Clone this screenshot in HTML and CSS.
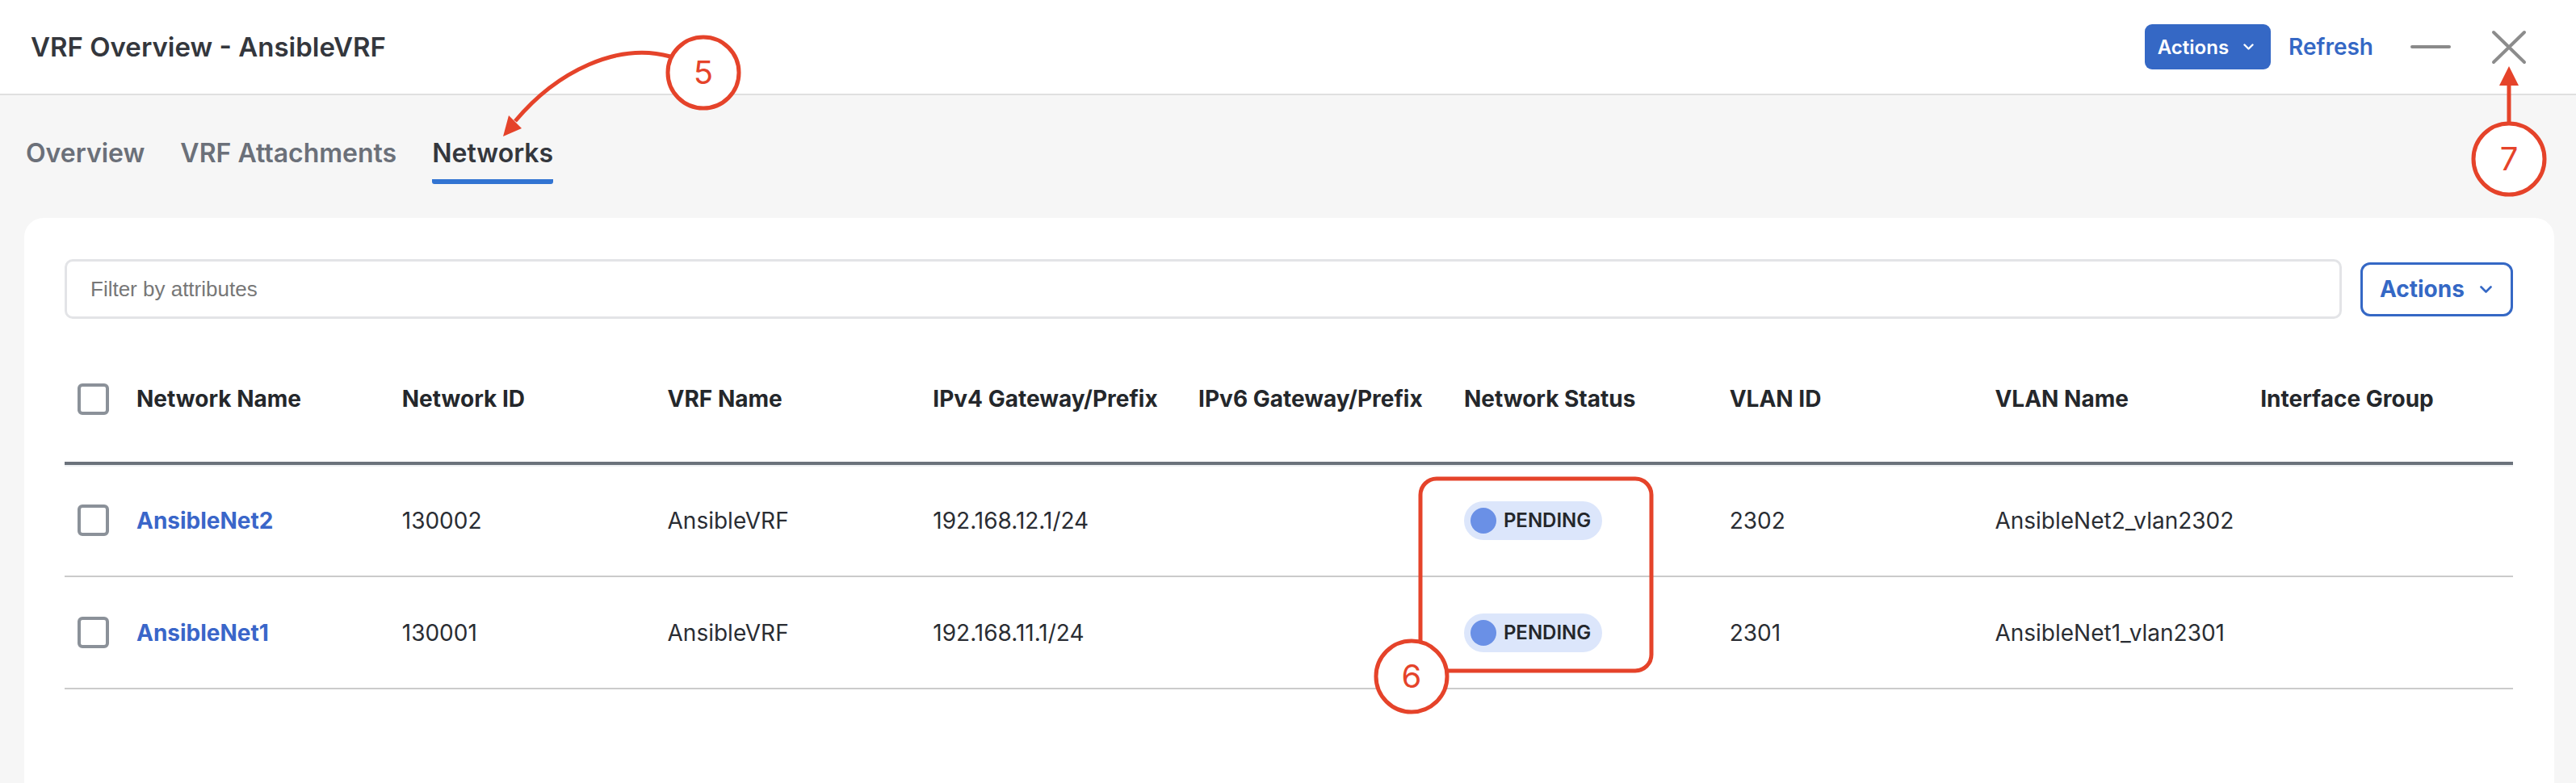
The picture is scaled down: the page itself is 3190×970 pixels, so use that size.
FILE: index.html
```html
<!DOCTYPE html>
<html lang="en">
<head>
<meta charset="UTF-8">
<title>VRF Overview - AnsibleVRF</title>
<link rel="stylesheet" href="styles.css">
</head>
<body>
<div class="page">
    <div class="topbar">
        <h1>VRF Overview - AnsibleVRF</h1>
        <div class="top-actions">
            <button class="btn-solid">Actions
                <svg width="13" height="8" viewBox="0 0 13 8"><path d="M1.5 1.5l5 5 5-5" fill="none" stroke="#fff" stroke-width="2.4" stroke-linecap="round" stroke-linejoin="round"/></svg>
            </button>
            <a class="refresh">Refresh</a>
            <span class="minimize"></span>
            <svg class="close" width="44" height="43" viewBox="0 0 44 43"><path d="M3 3l38 37M41 3L3 40" stroke="#8c8c8c" stroke-width="4" stroke-linecap="round"/></svg>
        </div>
    </div>

    <div class="tabs">
        <span class="tab">Overview</span>
        <span class="tab">VRF Attachments</span>
        <span class="tab active">Networks</span>
    </div>

    <div class="card">
        <div class="toolbar">
            <input type="text" class="filter" placeholder="Filter by attributes">
            <button class="btn-outline">Actions
                <svg width="15" height="9" viewBox="0 0 15 9"><path d="M1.5 1.5l6 6 6-6" fill="none" stroke="#3568c5" stroke-width="2.6" stroke-linecap="round" stroke-linejoin="round"/></svg>
            </button>
        </div>

        <div class="grid">
            <div class="row head">
                <div class="cell"><span class="check"></span></div>
                <div class="cell">Network Name</div>
                <div class="cell">Network ID</div>
                <div class="cell">VRF Name</div>
                <div class="cell">IPv4 Gateway/Prefix</div>
                <div class="cell">IPv6 Gateway/Prefix</div>
                <div class="cell">Network Status</div>
                <div class="cell">VLAN ID</div>
                <div class="cell">VLAN Name</div>
                <div class="cell">Interface Group</div>
            </div>
            <div class="row">
                <div class="cell"><span class="check"></span></div>
                <div class="cell"><a class="link">AnsibleNet2</a></div>
                <div class="cell">130002</div>
                <div class="cell">AnsibleVRF</div>
                <div class="cell">192.168.12.1/24</div>
                <div class="cell"></div>
                <div class="cell"><span class="pill"><span class="dot"></span>PENDING</span></div>
                <div class="cell">2302</div>
                <div class="cell">AnsibleNet2_vlan2302</div>
                <div class="cell"></div>
            </div>
            <div class="row">
                <div class="cell"><span class="check"></span></div>
                <div class="cell"><a class="link">AnsibleNet1</a></div>
                <div class="cell">130001</div>
                <div class="cell">AnsibleVRF</div>
                <div class="cell">192.168.11.1/24</div>
                <div class="cell"></div>
                <div class="cell"><span class="pill"><span class="dot"></span>PENDING</span></div>
                <div class="cell">2301</div>
                <div class="cell">AnsibleNet1_vlan2301</div>
                <div class="cell"></div>
            </div>
        </div>
    </div>
</div>

<!-- callout annotations drawn over the screen -->
<svg class="callouts" width="3190" height="970" viewBox="0 0 3190 970">
    <g fill="none" stroke="#e5432a" stroke-width="5">
        <path d="M830 70 C 765 52, 690 88, 638 150"/>
        <line x1="3107" y1="152" x2="3107" y2="104"/>
        <rect x="1759" y="593" width="286" height="238" rx="20"/>
    </g>
    <g fill="#e5432a">
        <polygon points="623,169 646,159 630,143"/>
        <polygon points="3107,82 3095,106 3119,106"/>
    </g>
    <g fill="#fff" stroke="#e5432a" stroke-width="5">
        <circle cx="871" cy="90" r="44"/>
        <circle cx="1748" cy="838" r="44"/>
        <circle cx="3107" cy="197" r="44"/>
    </g>
    <g class="callout-num" fill="#e5432a" text-anchor="middle">
        <text x="871" y="104">5</text>
        <text x="1748" y="852">6</text>
        <text x="3107" y="211">7</text>
    </g>
</svg>
</body>
</html>
```

FILE: styles.css
```css
body {
    margin: 0;
    font-family: Inter, "Noto Sans", sans-serif;
    background-color: #f6f6f6;
    color: #2a2d33;
    overflow: hidden;
}
.page {
    display: flex;
    flex-direction: column;
    height: 100vh;
}
.topbar {
    height: 116px;
    background-color: #fff;
    border-bottom: 2px solid #e0e0e0;
    display: flex;
    align-items: center;
    justify-content: space-between;
    padding: 0 61px 0 38px;
    flex-shrink: 0;
}
h1 {
    margin: 0;
    font-size: 33px;
    font-weight: 600;
    color: #34373d;
}
.top-actions {
    display: flex;
    align-items: center;
}
.btn-solid {
    height: 56px;
    padding: 0 21px 0 16px;
    background-color: #3568c5;
    color: #fff;
    border: none;
    border-radius: 9px;
    font-family: inherit;
    font-size: 24px;
    font-weight: 600;
    display: flex;
    align-items: center;
    gap: 18px;
}
.refresh {
    margin-left: 22px;
    color: #3568c5;
    font-size: 28px;
    font-weight: 600;
}
.minimize {
    margin-left: 46px;
    width: 50px;
    height: 4px;
    border-radius: 2px;
    background-color: #8a8a8a;
}
.close {
    margin-left: 50px;
}
.tabs {
    display: flex;
    gap: 44px;
    padding: 0 0 0 32px;
    height: 152px;
    flex-shrink: 0;
}
.tab {
    font-size: 32px;
    font-weight: 600;
    color: #6b7079;
    padding-top: 52px;
    height: 110px;
    box-sizing: border-box;
}
.tab.active {
    color: #34373d;
    border-bottom: 6px solid #3274d2;
    border-radius: 0 0 3px 3px;
}
.card {
    flex: 1;
    background-color: #fff;
    margin: 0 27px 0 30px;
    border-radius: 24px 24px 0 0;
    padding: 51px 51px 0 50px;
}
.toolbar {
    display: flex;
    align-items: center;
    gap: 23px;
}
.filter {
    flex: 1;
    height: 74px;
    box-sizing: border-box;
    border: 3px solid #e3e4e7;
    border-radius: 10px;
    padding: 0 29px;
    font-family: "Liberation Sans", Arial, sans-serif;
    font-size: 26px;
    color: #333;
    outline: none;
}
.filter::placeholder {
    color: #777;
}
.btn-outline {
    height: 67px;
    width: 189px;
    box-sizing: border-box;
    padding: 0 0 0 21px;
    background-color: #fff;
    color: #3568c5;
    border: 3px solid #3568c5;
    border-radius: 12px;
    font-family: inherit;
    font-size: 28px;
    font-weight: 700;
    display: flex;
    align-items: center;
    gap: 19px;
}
.grid {
    margin-top: 21px;
}
.row {
    display: grid;
    grid-template-columns: 73px repeat(9, 1fr);
    align-items: center;
    height: 139px;
    box-sizing: border-box;
    border-bottom: 2px solid #cbcbcb;
    font-size: 28px;
}
.row.head {
    height: 160px;
    border-bottom: 4px solid #6b727b;
    box-shadow: 0 2px 0 #eef0f2;
    font-weight: 700;
    color: #24272b;
}
.cell {
    padding-left: 16px;
    white-space: nowrap;
}
.check {
    display: block;
    width: 39px;
    height: 39px;
    box-sizing: border-box;
    border: 4px solid #8b9199;
    border-radius: 6px;
}
.link {
    color: #3a66c9;
    font-weight: 700;
}
.pill {
    display: inline-flex;
    align-items: center;
    gap: 9px;
    height: 48px;
    padding: 0 14px 0 8px;
    border-radius: 24px;
    background-color: #dce6fb;
    font-size: 24px;
    font-weight: 600;
    color: #24272b;
}
.dot {
    width: 32px;
    height: 32px;
    border-radius: 50%;
    background-color: #6a90e6;
}
.callouts {
    position: absolute;
    top: 0;
    left: 0;
    pointer-events: none;
}
.callout-num {
    font-family: Inter, sans-serif;
    font-size: 40px;
}
```
